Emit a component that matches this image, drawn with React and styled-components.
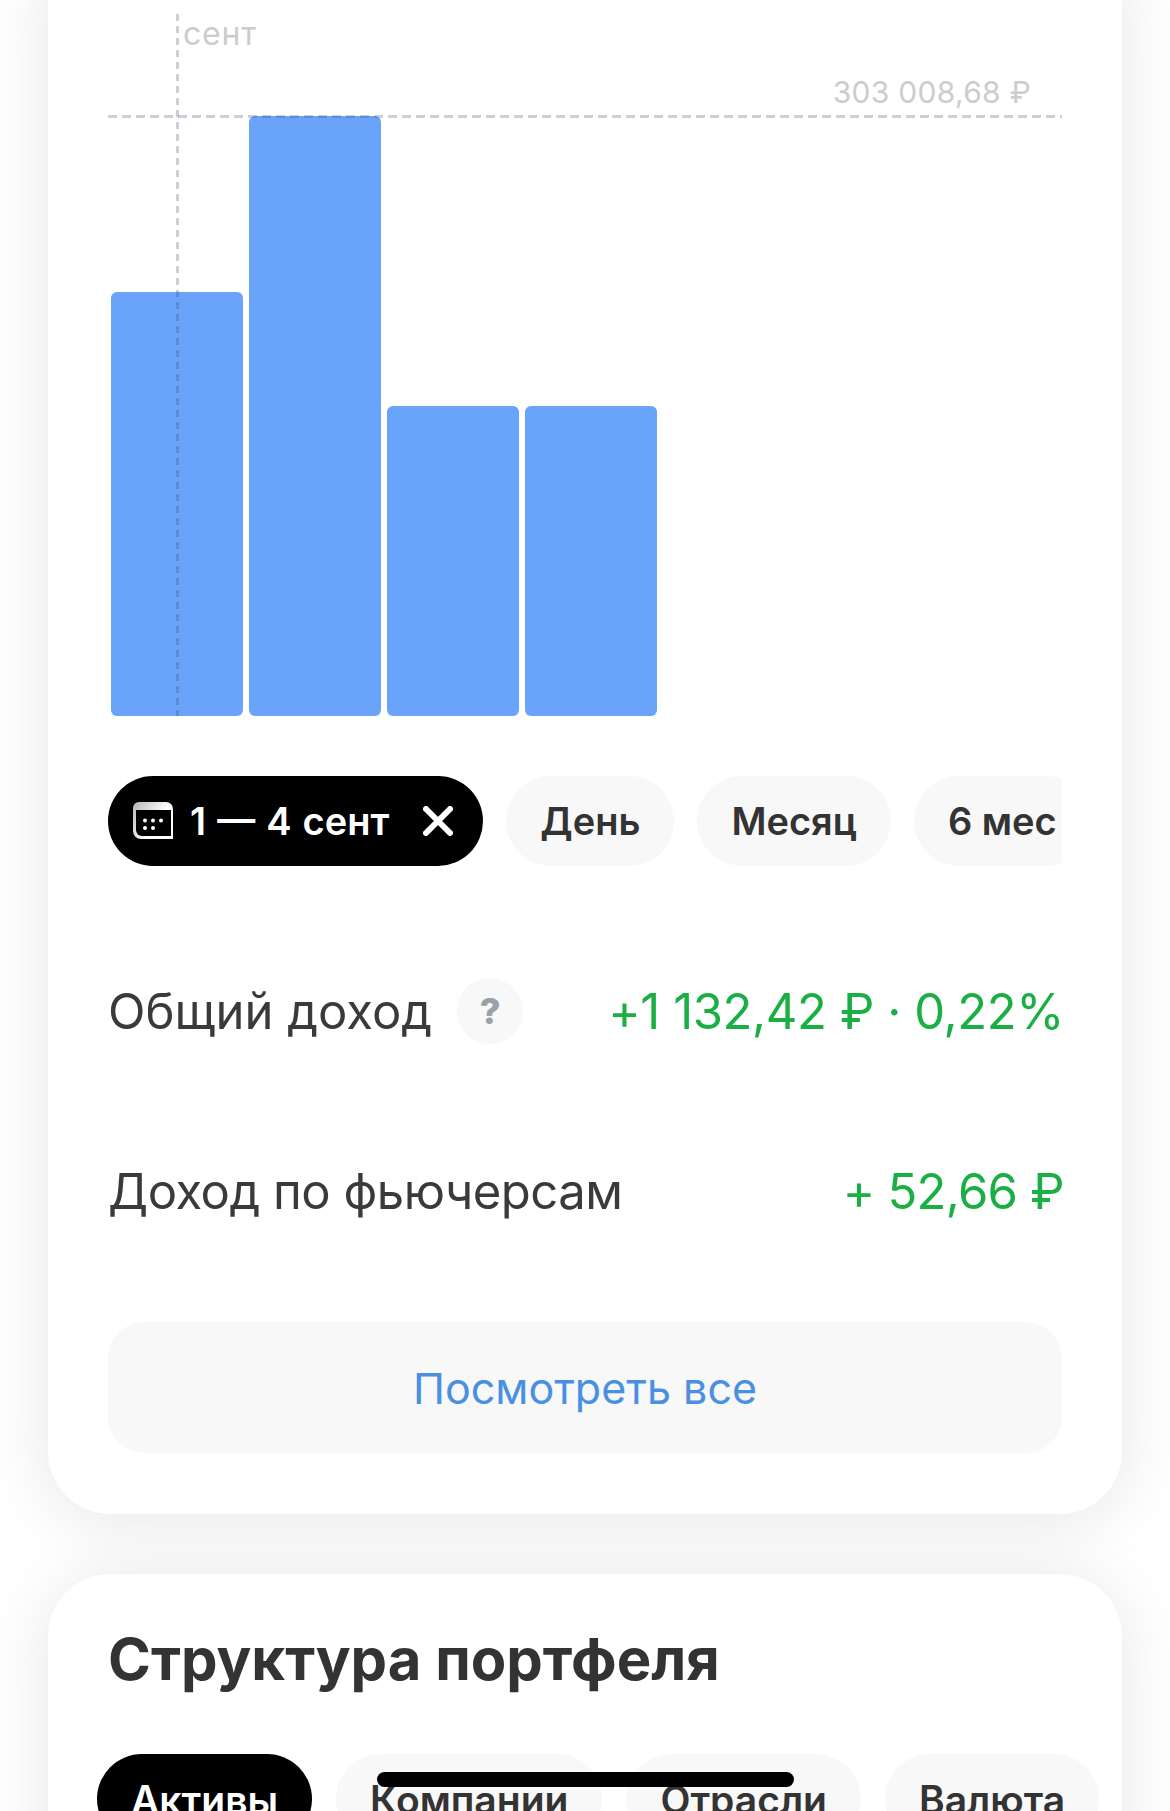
import React from 'react'
import styled, { createGlobalStyle } from 'styled-components'

const bars = [424, 600, 310, 310];
const periods = ['День', 'Месяц', '6 мес'];
const structureTabs = ['Активы', 'Компании', 'Отрасли', 'Валюта'];

const GlobalStyle = createGlobalStyle`
    html, body {
        margin: 0;
        height: 1811px;
        overflow: hidden;
        background: #fff;
        font-family: Inter, "Liberation Sans", sans-serif;
        color: #333;
    }
`;

function CalendarIcon() {
    return (
        <svg width="40" height="38" viewBox="0 0 40 38">
            <defs>
                <linearGradient id="calendarFade" x1="0" y1="0" x2="1" y2="0.6">
                    <stop offset="0" stopColor="#b5b5b5" />
                    <stop offset="0.7" stopColor="#fff" />
                </linearGradient>
            </defs>
            <path d="M6 0H33a7 7 0 0 1 7 7V37H8a8 8 0 0 1-8-8V6a6 6 0 0 1 6-6Z" fill="url(#calendarFade)" />
            <path d="M3 8H38V34H9a6 6 0 0 1-6-6Z" fill="#000" />
            {[12, 20, 28].map((x) => <circle key={x} cx={x} cy="18.5" r="2" fill="#fff" />)}
            {[12, 20].map((x) => <circle key={x} cx={x} cy="26" r="2" fill="#fff" />)}
        </svg>
    );
}

function CloseIcon() {
    return (
        <svg width="30" height="30" viewBox="0 0 30 30">
            <path d="M3 3L27 27M27 3L3 27" stroke="#fff" strokeWidth="6" strokeLinecap="round" />
        </svg>
    );
}

function App() {
    return (
        <Page>
            <GlobalStyle />
            <Card>
                <Chart>
                    {bars.map((height, i) => (
                        <Bar key={i} $height={height} />
                    ))}
                    <VerticalGuide />
                    <HorizontalGuide />
                    <MonthLabel>сент</MonthLabel>
                    <MaxLabel>303 008,68 ₽</MaxLabel>
                </Chart>
                <Periods>
                    <ActiveChip>
                        <CalendarIcon />
                        <ChipDates>1 — 4 сент</ChipDates>
                        <CloseIcon />
                    </ActiveChip>
                    {periods.map((label) => (
                        <Chip key={label}>{label}</Chip>
                    ))}
                </Periods>
                <Rows>
                    <Row>
                        <Label>
                            Общий доход
                            <HelpButton>?</HelpButton>
                        </Label>
                        <Value $spacing={-0.4}>+1 132,42 ₽ · 0,22%</Value>
                    </Row>
                    <Row>
                        <Label $spacing={-0.5}>Доход по фьючерсам</Label>
                        <Value $spacing={-0.7}>+ 52,66 ₽</Value>
                    </Row>
                </Rows>
                <ViewAll>Посмотреть все</ViewAll>
            </Card>
            <SecondCard>
                <Title>Структура портфеля</Title>
                <Tabs>
                    {structureTabs.map((label, i) => (
                        <Tab key={label} $active={i === 0}>{label}</Tab>
                    ))}
                </Tabs>
            </SecondCard>
            <HomeBar />
        </Page>
    );
}

const Page = styled.div`
    height: 1811px;
    overflow: hidden;
    position: relative;
`;

const Card = styled.section`
    margin: -60px 48px 0;
    padding: 74px 60px 61px;
    background: #fff;
    border-radius: 62px;
    box-shadow: 0 6px 70px rgba(0, 0, 0, 0.1);
`;

const SecondCard = styled(Card)`
    margin-top: 60px;
    padding-top: 49px;
    position: relative;
`;

const Chart = styled.div`
    position: relative;
    height: 702px;
    padding-left: 3px;
    display: flex;
    align-items: flex-end;
    gap: 6px;
`;

const Bar = styled.div`
    width: 132px;
    height: ${(p) => p.$height}px;
    background: #6aa3fa;
    border-radius: 6px;
`;

const VerticalGuide = styled.div`
    position: absolute;
    left: 68px;
    top: 0;
    bottom: 0;
    width: 3px;
    background: repeating-linear-gradient(to bottom, rgba(60, 70, 100, 0.26) 0 7px, transparent 7px 12px);
`;

const HorizontalGuide = styled.div`
    position: absolute;
    left: 0;
    right: 0;
    top: 101px;
    height: 3px;
    background: repeating-linear-gradient(to right, rgba(60, 70, 100, 0.26) 0 9px, transparent 9px 14px);
`;

const MonthLabel = styled.span`
    position: absolute;
    left: 75px;
    top: 0;
    font-size: 32px;
    line-height: 40px;
    letter-spacing: 0.8px;
    color: #ccc;
`;

const MaxLabel = styled.span`
    position: absolute;
    right: 31px;
    top: 60px;
    font-size: 30px;
    line-height: 36px;
    letter-spacing: 0.3px;
    color: #ccc;
`;

const Periods = styled.div`
    display: flex;
    gap: 23px;
    margin-top: 60px;
    overflow: hidden;
`;

const Chip = styled.div`
    flex: none;
    height: 90px;
    padding: 0 34px;
    display: flex;
    align-items: center;
    background: #f8f8f8;
    border-radius: 45px;
    font-size: 38px;
    font-weight: 600;
`;

const ActiveChip = styled(Chip)`
    padding: 0 30px 0 25px;
    gap: 17px;
    background: #000;
    color: #fff;
`;

const ChipDates = styled.span`
    margin-right: 17px;
    word-spacing: 1.5px;
`;

const Rows = styled.div`
    margin-top: 55px;
`;

const Row = styled.div`
    height: 180px;
    display: flex;
    align-items: center;
    justify-content: space-between;
    font-size: 49px;
`;

const Label = styled.div`
    display: flex;
    align-items: center;
    gap: 25px;
    letter-spacing: ${(p) => p.$spacing || 0}px;
    color: #3a3a3a;
`;

const HelpButton = styled.span`
    width: 66px;
    height: 66px;
    display: flex;
    align-items: center;
    justify-content: center;
    border-radius: 50%;
    background: #f8f8f8;
    color: #9ba1a8;
    font-size: 36px;
    font-weight: 800;
`;

const Value = styled.div`
    margin-right: -2px;
    letter-spacing: ${(p) => p.$spacing || 0}px;
    color: #1aaf45;
`;

const ViewAll = styled.div`
    height: 131px;
    margin-top: 41px;
    display: flex;
    align-items: center;
    justify-content: center;
    background: #f8f8f8;
    border-radius: 36px;
    color: #4a90e2;
    font-size: 43px;
`;

const Title = styled.h2`
    margin: 0;
    font-size: 58px;
    line-height: 72px;
    font-weight: 700;
    color: #333;
`;

const Tabs = styled.div`
    display: flex;
    gap: 24px;
    margin: 59px 0 0 -11px;
`;

const Tab = styled(Chip)`
    padding: 0 34px;
    font-size: 39px;
    background: ${(p) => (p.$active ? '#000' : '#f8f8f8')};
    color: ${(p) => (p.$active ? '#fff' : '#333')};
`;

const HomeBar = styled.div`
    position: absolute;
    left: 377px;
    top: 1772px;
    width: 417px;
    height: 15px;
    background: #000;
    border-radius: 8px;
`;

export default App;
